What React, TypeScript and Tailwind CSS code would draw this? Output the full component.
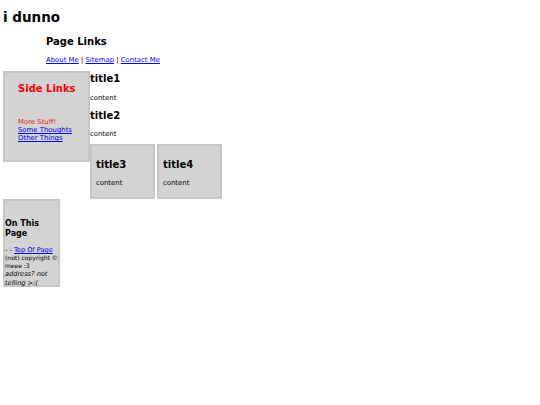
const boxes = [
  { title: 'title3', body: 'content' },
  { title: 'title4', body: 'content' },
]

export default function App() {
  return (
    <div className="h-[405px] w-[540px] bg-white font-['DejaVu_Sans',Verdana,sans-serif] text-black">
      {/* Header */}
      <h1 className="pl-[3px] pt-[10px] text-[13.5px] font-bold leading-[14px]">i dunno</h1>

      {/* Page links */}
      <div className="ml-[46px] mt-[12px]">
        <h2 className="text-[10px] font-bold leading-[12px]">Page Links</h2>
        <p className="mt-[8px] text-[6.9px] leading-[9px]">
          <a href="#" className="text-[#0000ee] underline">About Me</a> |{' '}
          <a href="#" className="text-[#0000ee] underline">Sitemap</a> |{' '}
          <a href="#" className="text-[#0000ee] underline">Contact Me</a>
        </p>
      </div>

      {/* Side + main */}
      <div className="mt-[6px] flex items-start pl-[3px]">
        <aside className="h-[91px] w-[87px] shrink-0 border-2 border-[#c6c6c6] bg-[#d3d3d3] pl-[13px] pt-[9px]">
          <h3 className="text-[10px] font-bold leading-[14px] text-[#ff0000]">Side Links</h3>
          <ul className="mt-[22px] text-[6.9px] leading-[8px]">
            <li className="text-[#ee2222]">More Stuff!</li>
            <li><a href="#" className="text-[#0000ee] underline">Some Thoughts</a></li>
            <li><a href="#" className="text-[#0000ee] underline">Other Things</a></li>
          </ul>
        </aside>

        <main className="flex flex-col pt-[1px]">
          <h3 className="text-[10px] font-bold leading-[14px]">title1</h3>
          <p className="mt-[7px] text-[6.9px] leading-[10px]">content</p>
          <h3 className="mt-[6px] text-[10px] font-bold leading-[14px]">title2</h3>
          <p className="mt-[6px] text-[6.9px] leading-[10px]">content</p>
          <div className="mt-[5px] flex gap-[2px]">
            {boxes.map((b) => (
              <div key={b.title} className="h-[55px] w-[65px] border-2 border-[#c6c6c6] bg-[#d3d3d3] pl-[4px] pt-[12px]">
                <h4 className="text-[10px] font-bold leading-[14px]">{b.title}</h4>
                <p className="mt-[6px] text-[6.9px] leading-[10px]">{b.body}</p>
              </div>
            ))}
          </div>
        </main>
      </div>

      {/* Footer */}
      <footer className="ml-[3px] h-[88px] w-[57px] border-2 border-[#c6c6c6] bg-[#d3d3d3] pt-[18px]">
        <h4 className="text-[8px] font-bold leading-[10px]">On This Page</h4>
        <p className="mt-[7px] text-[6.6px] leading-[8px]">
          - - <a href="#" className="text-[#0000ee] underline">Top Of Page</a>
        </p>
        <p className="text-[6px] leading-[8px]">(not) copyright © meee :3</p>
        <p className="text-[6.6px] italic leading-[8.5px]">address? not telling &gt;:(</p>
      </footer>
    </div>
  )
}
